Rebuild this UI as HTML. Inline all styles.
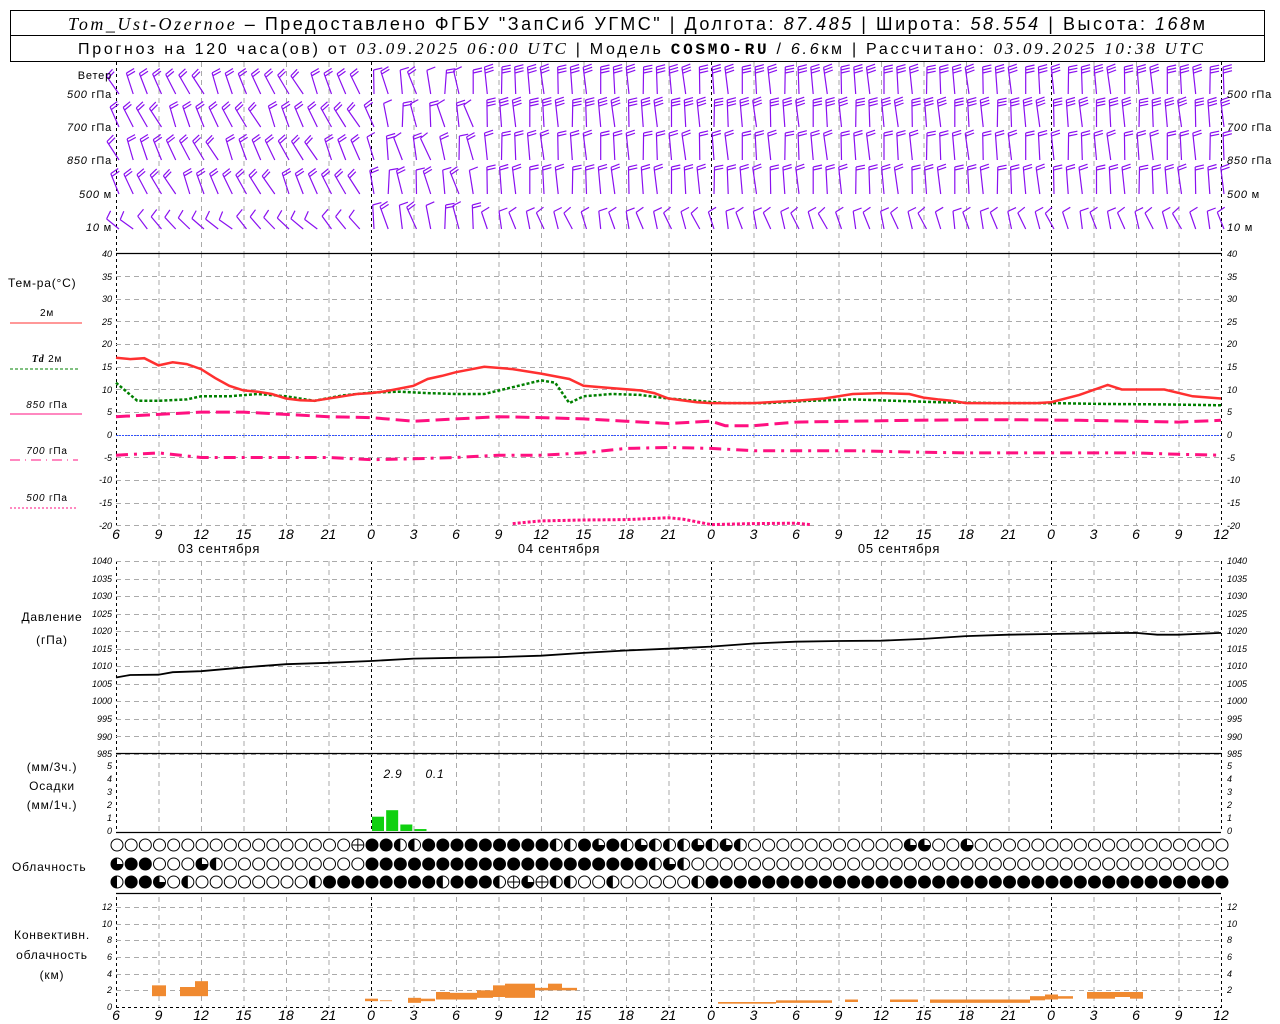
<!DOCTYPE html>
<html><head><meta charset="utf-8"><style>
html,body{margin:0;padding:0;background:#fff;}
svg{display:block;font-family:"Liberation Sans",sans-serif;}
.t{font-size:11px;fill:#000;letter-spacing:0.8px}
.ax{font-size:9px;font-style:italic;fill:#000}
.hx{font-size:14px;font-style:italic;fill:#000}
</style></head><body>
<svg id="s" width="1280" height="1024" viewBox="0 0 1280 1024" xmlns="http://www.w3.org/2000/svg">
<rect x="0" y="0" width="1280" height="1024" fill="#fff"/>
<g id="grid"></g><g id="data"></g>
<rect x="10.5" y="10.5" width="1254" height="25" fill="none" stroke="#000"/>
<rect x="10.5" y="35.5" width="1254" height="26" fill="none" stroke="#000"/>
<text x="68" y="30" textLength="1137" lengthAdjust="spacing" font-size="18" fill="#000"><tspan font-family="Liberation Serif" font-style="italic">Tom_Ust-Ozernoe</tspan> – Предоставлено ФГБУ "ЗапСиб УГМС" | Долгота: <tspan font-style="italic">87.485</tspan> | Широта: <tspan font-style="italic">58.554</tspan> | Высота: <tspan font-style="italic">168</tspan>м</text>
<text x="78" y="54" textLength="1125" lengthAdjust="spacing" font-size="16" fill="#000">Прогноз на 120 часа(ов) от <tspan font-family="Liberation Serif" font-style="italic" font-size="17">03.09.2025 06:00 UTC</tspan>  | Модель <tspan font-family="Liberation Mono" font-weight="bold">COSMO-RU</tspan> / <tspan font-style="italic">6.6</tspan>км | Рассчитано: <tspan font-family="Liberation Serif" font-style="italic" font-size="17">03.09.2025 10:38 UTC</tspan></text>
<g class="t" font-size="10">
<text x="112" y="79" text-anchor="end" font-size="11">Ветер</text>
<text x="112" y="98" text-anchor="end"><tspan font-style="italic">500</tspan> гПа</text>
<text x="112" y="131" text-anchor="end"><tspan font-style="italic">700</tspan> гПа</text>
<text x="112" y="164" text-anchor="end"><tspan font-style="italic">850</tspan> гПа</text>
<text x="112" y="198" text-anchor="end"><tspan font-style="italic">500</tspan> м</text>
<text x="112" y="231" text-anchor="end"><tspan font-style="italic">10</tspan> м</text>
<text x="1227" y="98"><tspan font-style="italic">500</tspan> гПа</text>
<text x="1227" y="131"><tspan font-style="italic">700</tspan> гПа</text>
<text x="1227" y="164"><tspan font-style="italic">850</tspan> гПа</text>
<text x="1227" y="198"><tspan font-style="italic">500</tspan> м</text>
<text x="1227" y="231"><tspan font-style="italic">10</tspan> м</text>
</g>
<g class="t" font-size="11">
<text x="8" y="287" font-size="12">Тем-ра(°C)</text>
<text x="47" y="316" text-anchor="middle" font-size="10">2м</text>
<line x1="10" y1="323" x2="82" y2="323" stroke="#ff3030"/>
<text x="47" y="362" text-anchor="middle" font-size="10"><tspan font-style="italic" font-weight="bold" font-family="Liberation Serif">Td</tspan>  2м</text>
<line x1="10" y1="369" x2="78" y2="369" stroke="#008000" stroke-dasharray="3,2"/>
<text x="47" y="408" text-anchor="middle" font-size="10"><tspan font-style="italic">850</tspan> гПа</text>
<line x1="10" y1="414" x2="82" y2="414" stroke="#ff1080"/>
<text x="47" y="454" text-anchor="middle" font-size="10"><tspan font-style="italic">700</tspan> гПа</text>
<line x1="10" y1="460" x2="78" y2="460" stroke="#ff1080" stroke-dasharray="10,5,1,5"/>
<text x="47" y="501" text-anchor="middle" font-size="10"><tspan font-style="italic">500</tspan> гПа</text>
<line x1="10" y1="508" x2="78" y2="508" stroke="#ff1080" stroke-dasharray="2,2"/>
<text x="52" y="621" text-anchor="middle" font-size="12">Давление</text>
<text x="52" y="644" text-anchor="middle" font-size="12">(гПа)</text>
<text x="52" y="771" text-anchor="middle" font-size="12">(мм/3ч.)</text>
<text x="52" y="790" text-anchor="middle" font-size="12">Осадки</text>
<text x="52" y="809" text-anchor="middle" font-size="12">(мм/1ч.)</text>
<text x="12" y="871" font-size="12">Облачность</text>
<text x="52" y="939" text-anchor="middle" font-size="12">Конвективн.</text>
<text x="52" y="959" text-anchor="middle" font-size="12">облачность</text>
<text x="52" y="979" text-anchor="middle" font-size="12">(км)</text>
<text x="393" y="778" text-anchor="middle" font-size="12" font-style="italic">2.9</text>
<text x="435" y="778" text-anchor="middle" font-size="12" font-style="italic">0.1</text>
<text x="219" y="553" text-anchor="middle" font-size="13">03 сентября</text>
<text x="559" y="553" text-anchor="middle" font-size="13">04 сентября</text>
<text x="899" y="553" text-anchor="middle" font-size="13">05 сентября</text>
</g>
<g class="hx" text-anchor="middle">
<text x="116" y="539">6</text><text x="158.5" y="539">9</text><text x="201" y="539">12</text><text x="243.5" y="539">15</text><text x="286" y="539">18</text><text x="328.5" y="539">21</text><text x="371" y="539">0</text><text x="413.5" y="539">3</text><text x="456" y="539">6</text><text x="498.5" y="539">9</text><text x="541" y="539">12</text><text x="583.5" y="539">15</text><text x="626" y="539">18</text><text x="668.5" y="539">21</text><text x="711" y="539">0</text><text x="753.5" y="539">3</text><text x="796" y="539">6</text><text x="838.5" y="539">9</text><text x="881" y="539">12</text><text x="923.5" y="539">15</text><text x="966" y="539">18</text><text x="1008.5" y="539">21</text><text x="1051" y="539">0</text><text x="1093.5" y="539">3</text><text x="1136" y="539">6</text><text x="1178.5" y="539">9</text><text x="1221" y="539">12</text>
</g>
<g class="hx" text-anchor="middle">
<text x="116" y="1020">6</text><text x="158.5" y="1020">9</text><text x="201" y="1020">12</text><text x="243.5" y="1020">15</text><text x="286" y="1020">18</text><text x="328.5" y="1020">21</text><text x="371" y="1020">0</text><text x="413.5" y="1020">3</text><text x="456" y="1020">6</text><text x="498.5" y="1020">9</text><text x="541" y="1020">12</text><text x="583.5" y="1020">15</text><text x="626" y="1020">18</text><text x="668.5" y="1020">21</text><text x="711" y="1020">0</text><text x="753.5" y="1020">3</text><text x="796" y="1020">6</text><text x="838.5" y="1020">9</text><text x="881" y="1020">12</text><text x="923.5" y="1020">15</text><text x="966" y="1020">18</text><text x="1008.5" y="1020">21</text><text x="1051" y="1020">0</text><text x="1093.5" y="1020">3</text><text x="1136" y="1020">6</text><text x="1178.5" y="1020">9</text><text x="1221" y="1020">12</text>
</g>
<g class="ax" text-anchor="end">
<text x="112" y="257">40</text><text x="112" y="280">35</text><text x="112" y="302">30</text><text x="112" y="325">25</text><text x="112" y="347">20</text><text x="112" y="370">15</text><text x="112" y="393">10</text><text x="112" y="415">5</text><text x="112" y="438">0</text><text x="112" y="461">-5</text><text x="112" y="483">-10</text><text x="112" y="506">-15</text><text x="112" y="529">-20</text>
<text x="112" y="564">1040</text><text x="112" y="582">1035</text><text x="112" y="599">1030</text><text x="112" y="617">1025</text><text x="112" y="634">1020</text><text x="112" y="652">1015</text><text x="112" y="669">1010</text><text x="112" y="687">1005</text><text x="112" y="704">1000</text><text x="112" y="722">995</text><text x="112" y="740">990</text><text x="112" y="757">985</text>
<text x="112" y="769">5</text><text x="112" y="782">4</text><text x="112" y="795">3</text><text x="112" y="808">2</text><text x="112" y="821">1</text><text x="112" y="834">0</text>
<text x="112" y="910">12</text><text x="112" y="927">10</text><text x="112" y="943">8</text><text x="112" y="960">6</text><text x="112" y="977">4</text><text x="112" y="993">2</text><text x="112" y="1010">0</text>
</g>
<g class="ax">
<text x="1227" y="257">40</text><text x="1227" y="280">35</text><text x="1227" y="302">30</text><text x="1227" y="325">25</text><text x="1227" y="347">20</text><text x="1227" y="370">15</text><text x="1227" y="393">10</text><text x="1227" y="415">5</text><text x="1227" y="438">0</text><text x="1227" y="461">-5</text><text x="1227" y="483">-10</text><text x="1227" y="506">-15</text><text x="1227" y="529">-20</text>
<text x="1227" y="564">1040</text><text x="1227" y="582">1035</text><text x="1227" y="599">1030</text><text x="1227" y="617">1025</text><text x="1227" y="634">1020</text><text x="1227" y="652">1015</text><text x="1227" y="669">1010</text><text x="1227" y="687">1005</text><text x="1227" y="704">1000</text><text x="1227" y="722">995</text><text x="1227" y="740">990</text><text x="1227" y="757">985</text>
<text x="1227" y="769">5</text><text x="1227" y="782">4</text><text x="1227" y="795">3</text><text x="1227" y="808">2</text><text x="1227" y="821">1</text><text x="1227" y="834">0</text>
<text x="1227" y="910">12</text><text x="1227" y="927">10</text><text x="1227" y="943">8</text><text x="1227" y="960">6</text><text x="1227" y="977">4</text><text x="1227" y="993">2</text>
</g>
</svg>
<script>
(function(){
var NS="http://www.w3.org/2000/svg";
var G=document.getElementById("grid"),D=document.getElementById("data");
function el(p,n,a){var e=document.createElementNS(NS,n);for(var k in a)e.setAttribute(k,a[k]);p.appendChild(e);return e;}
function X(h){return 116+h*340/24;}
function ln(p,x1,y1,x2,y2,c,w,da){var a={x1:x1,y1:y1,x2:x2,y2:y2,stroke:c,"stroke-width":w||1};if(da)a["stroke-dasharray"]=da;return el(p,"line",a);}
var panels=[[62,253],[253,525],[561,754],[754,832],[897,1008]];
panels.forEach(function(pn){
 for(var i=0;i<=26;i++){var x=X(i*3)+0.5;var day=(i%8==6)||i==0||i==26;
  ln(G,x,pn[0],x,pn[1],day?"#000":"#aaa",1,day?"3,3":"5,4");}
});
for(var t=35;t>=-20;t-=5){var y=Math.round(434.8-t*4.533)+0.5;ln(G,116,y,1221,y,"#aaa",1,"5,4");}
ln(G,116,435.5,1221,435.5,"#3050ff",1,"2,1");
for(var k=0;k<12;k++){var y=Math.round(561+k*17.545)+0.5;ln(G,116,y,1221,y,"#aaa",1,"5,4");}
for(var k=1;k<=6;k++){var y=Math.round(1007-k*16.67)+0.5;ln(G,116,y,1221,y,"#aaa",1,"5,4");}
ln(G,116,1007.5,1221,1007.5,"#000",1,"3,3");
ln(G,116,253.5,1221,253.5,"#000",1.2);
ln(G,116,753.5,1221,753.5,"#000",1.2);
ln(G,116,832.5,1221,832.5,"#000",1.2);
ln(G,116,893.5,1221,893.5,"#000",1.2);
function poly(pts,yf,c,w,da){var s=pts.map(function(p){return X(p[0]).toFixed(1)+","+yf(p[1]).toFixed(1)}).join(" ");var a={points:s,fill:"none",stroke:c,"stroke-width":w};if(da)a["stroke-dasharray"]=da;el(D,"polyline",a);}
function yT(t){return 434.8-t*4.533;}
var T=[[0,17],[1,16.7],[2,16.9],[3,15.3],[4,16],[5,15.6],[6,14.5],[7,12.5],[8,10.8],[9,9.8],[10,9.5],[11,9],[12,8],[13,7.6],[14,7.5],[15,8],[16,8.5],[17,9],[18,9.2],[19,9.6],[20,10.2],[21,10.8],[22,12.3],[23,13],[24,13.8],[26,15],[28,14.5],[30,13.5],[32,12.3],[33,10.8],[35,10.3],[37,9.8],[38,9.2],[39,8],[41,7.2],[42,7],[45,7],[48,7.5],[50,8],[52,9],[54,9.2],[56,9],[57,8.2],[58,7.8],[59,7.5],[60,7],[65,7],[66,7.2],[68,8.8],[70,11],[71,10],[74,10],[76,8.5],[78,8]];
var Td=[[0,11.5],[1.5,7.5],[3,7.5],[5,7.8],[6,8.5],[8,8.5],[10,9],[12,8.5],[14,7.5],[16,8.7],[18,9.3],[20,9.5],[22,9.2],[24,9],[26,9],[28,10.5],[30,12],[31,11.5],[32,7],[33,8.5],[35,9],[37,8.8],[39,8],[41,7.5],[43,7],[46,7],[49,7.5],[52,7.8],[55,7.5],[58,7.2],[62,7],[66,7],[70,6.8],[74,6.7],[78,6.5]];
poly(Td,yT,"#008000",2.5,"3,2");
poly(T,yT,"#ff3030",2.5);
var T850=[[0,4],[3,4.5],[6,5],[9,5],[12,4.5],[15,4],[18,3.8],[21,3],[24,3.5],[27,4],[30,3.8],[33,3.5],[36,3],[39,2.5],[42,3],[43,2],[45,2],[48,2.8],[52,3],[56,3.2],[60,3.3],[64,3.3],[68,3.2],[72,3],[75,2.8],[78,3.2]];
poly(T850,yT,"#ff1080",3,"14,6");
var T700=[[0,-4.5],[3,-4],[6,-5],[9,-5],[12,-5],[15,-5],[18,-5.5],[21,-5.3],[24,-5],[27,-4.5],[30,-4.5],[33,-4],[36,-3],[39,-2.8],[42,-3],[45,-3.5],[48,-3.5],[52,-3.5],[56,-3.8],[60,-4],[64,-4],[68,-4],[72,-4],[75,-4.3],[78,-4.5]];
poly(T700,yT,"#ff1080",3,"12,6,3,6");
var T500=[[28,-19.6],[30,-19],[33,-18.8],[36,-18.7],[39,-18.3],[40,-18.6],[42,-19.8],[45,-19.6],[48,-19.5],[49,-19.8]];
poly(T500,yT,"#ff1080",3,"3,2");
function yP(p){return 561+(1040-p)*3.509;}
var P=[[0,1006.8],[1,1007.5],[3,1007.6],[4,1008.3],[6,1008.6],[8,1009.3],[10,1010],[12,1010.6],[15,1011],[18,1011.5],[21,1012.2],[24,1012.4],[27,1012.6],[30,1013],[33,1013.8],[36,1014.5],[39,1015],[42,1015.6],[45,1016.5],[48,1017],[51,1017.2],[54,1017.3],[57,1017.8],[60,1018.6],[63,1019],[66,1019.2],[69,1019.4],[72,1019.5],[73.5,1019],[75,1019],[78,1019.5]];
poly(P,yP,"#000",1.8);
[[18,1.1],[19,1.6],[20,0.5],[21,0.15]].forEach(function(b){el(D,"rect",{x:X(b[0])+1,y:831-b[1]*13,width:12,height:b[1]*13,fill:"#10d010"});});
var rows=[
"oooooooooooooooooaffhhfffffffffhhfqfhqhhhqhqhoooooooooooqqooqoooooooooooooooooo",
"qffoooqhooooooooooffffffffffffffffffffhqhoooooooooooooooooooooooooooooooooooooo",
"hffqohoooooooohffffffffhfffhaqahhoohooooohfffffffffffffffffffffffffffffffffffff"];
var ry=[845,864,882];
rows.forEach(function(r,ri){for(var h=0;h<=78;h++){var cx=X(h)+1,cy=ry[ri],c=r.charAt(h)||"o";
 if(c=="f")el(D,"circle",{cx:cx,cy:cy,r:6.5,fill:"#000"});
 else{el(D,"circle",{cx:cx,cy:cy,r:6,fill:"#fff",stroke:"#000","stroke-width":1});
  if(c=="h")el(D,"path",{d:"M"+cx+","+(cy-6)+"A6,6 0 0,0 "+cx+","+(cy+6)+"Z",fill:"#000"});
  if(c=="q")el(D,"path",{d:"M"+cx+","+cy+"L"+cx+","+(cy-6)+"A6,6 0 1,0 "+(cx+6)+","+cy+"Z",fill:"#000"});
  if(c=="a")el(D,"path",{d:"M"+(cx-6)+","+cy+"L"+(cx+6)+","+cy+"M"+cx+","+(cy-6)+"L"+cx+","+(cy+6),stroke:"#000"});
 }}});
function yC(k){return 1007-k*8.33;}
// [x1,x2,bottom,top] in px / km
[[152,166,1.3,2.6],[180,195,1.3,2.4],[195,208,1.3,3.1],[365,378,0.7,1],[380,392,0.7,0.8],[408,421,0.5,1.1],[421,435,0.7,1],[436,450,0.9,1.8],[450,477,0.9,1.7],[477,493,1.1,2],[493,505,1.2,2.6],[505,535,1.1,2.8],[535,548,2,2.3],[548,562,2,2.8],[562,577,2,2.3],
[718,776,0.4,0.6],[776,832,0.5,0.8],[845,858,0.6,0.9],[890,918,0.6,0.9],[930,1030,0.5,0.9],[1030,1045,0.8,1.3],[1045,1058,0.9,1.5],[1058,1073,1,1.3],[1087,1115,1,1.8],[1115,1130,1.2,1.8],[1130,1143,1,1.8]
].forEach(function(b){el(D,"rect",{x:b[0],y:yC(b[3]),width:b[1]-b[0],height:yC(b[2])-yC(b[3]),fill:"#f08a30"});});
var W=document.createElementNS(NS,"g");W.setAttribute("stroke","#8a10f0");W.setAttribute("stroke-width","1.2");W.setAttribute("fill","none");D.appendChild(W);
var rowsY=[94,127,160,194,227];
function barb(x,yb,ang,n,len){var a=ang*Math.PI/180;var dx=Math.sin(a),dy=-Math.cos(a);
 var tx=x+dx*len,ty=yb+dy*len;var d="M"+x.toFixed(1)+","+yb+"L"+tx.toFixed(1)+","+ty.toFixed(1);
 var fa=a+1.35;var fx=Math.sin(fa)*9,fy=-Math.cos(fa)*9;
 for(var i=0;i<n;i++){var px=tx-dx*i*3,py=ty-dy*i*3;d+="M"+px.toFixed(1)+","+py.toFixed(1)+"l"+fx.toFixed(1)+","+fy.toFixed(1);}
 el(W,"path",{d:d});}
for(var r=0;r<5;r++){for(var h=0;h<=78;h++){var x=X(h)+3;var ang,n,len=27;
 if(h<18){ang=(r==4?-55:-35)+((h*37+r*11)%20);n=r==4?1:2;len=r==4?16:22;}
 else if(h<26){ang=-25+((h*13+r*7)%30);n=1+(h+r)%2;len=24;}
 else{ang=-8+((h*7+r*5)%10);n=r<2?3:2;if(r==4){ang=-30+((h*11)%25);n=1;len=18;}}
 barb(x,rowsY[r]-(r==4?-2:0),ang,n,len);}}
})();
</script>
</body></html>
